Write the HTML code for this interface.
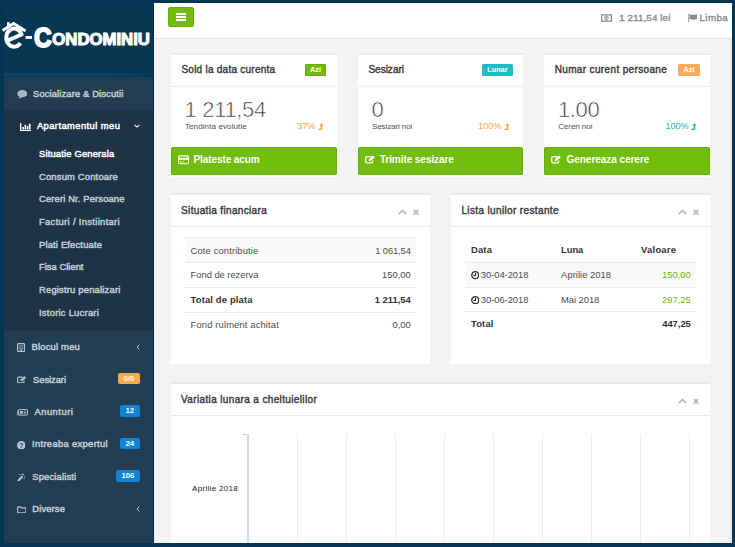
<!DOCTYPE html>
<html><head><meta charset="utf-8"><title>e-Condominiu</title>
<style>
*{box-sizing:border-box;margin:0;padding:0}
html,body{width:735px;height:547px;overflow:hidden}
body{background:#043552;font-family:"Liberation Sans",sans-serif;font-size:9.05px;color:#676a6c;position:relative}
.abs{position:absolute}
#side{left:4px;top:3px;width:148.5px;height:540px;background:#223d51}
#shead{left:0;top:0;width:148.5px;height:73.5px;background:linear-gradient(to right,#09436b 0,#09436b 72%,#06395a 100%) left bottom/100% 3.4px no-repeat,#063853}
#sact{left:0;top:107px;width:148.5px;height:220.5px;background:#1e3446}
#sline{left:152.5px;top:3px;width:1px;height:540px;background:#0b2a45}
#main{left:153.5px;top:3px;width:578.5px;height:540px;background:#f3f3f4;overflow:hidden}
#rb{left:732px;top:0;width:3px;height:547px;background:#043552}
#topbar{left:0;top:0;width:578.5px;height:35.5px;background:#fff;border-bottom:1px solid #e4e7ea}
#scroll{left:575px;top:35.5px;width:3.5px;height:505px;background:#ebebee}
.nav{position:absolute;left:0;width:148.5px;height:14px;line-height:14px;font-weight:normal;-webkit-text-stroke:0.46px currentColor;color:#c2cdd5;white-space:nowrap;font-size:9.4px}
.nav span.t{position:absolute;top:0}
.nav.w{color:#fff}
.nav svg{position:absolute}
.bdg{position:absolute;height:11.3px;line-height:11.6px;border-radius:2px;color:#fff;font-size:7.7px;font-weight:bold;text-align:center}
.card{position:absolute;background:#fff;border-top:2px solid #e7eaec}
.ttl{position:absolute;font-weight:normal;-webkit-text-stroke:0.42px #3a3e41;color:#3a3e41;font-size:10px;white-space:nowrap;line-height:12px}
.sep{position:absolute;left:0;right:0;height:1px;background:#e7eaec}
.btn{position:absolute;background:#72bc0c;box-shadow:inset 0 0 0 1px #65b00a;border-radius:2.5px;color:#fff;font-weight:bold;font-size:10.1px;white-space:nowrap}
.btn span{position:absolute;line-height:12px}
.big{position:absolute;font-size:22px;color:#33373a;white-space:nowrap;line-height:22px;letter-spacing:-0.35px;-webkit-text-stroke:0.6px #fff}
.sm{position:absolute;font-size:8.1px;white-space:nowrap;line-height:9px;color:#4c4f52}
.pct{position:absolute;font-size:9.05px;white-space:nowrap;line-height:9px;font-weight:normal}
.row{position:absolute;height:24.8px;border-top:1px solid #e7eaec;line-height:24.4px;white-space:nowrap;color:#4b4e51;font-size:9.4px}
.row span{position:absolute;top:0}
.row .r{text-align:right}
.b{font-weight:bold;color:#2f3336}
.tb{font-size:9.75px;font-weight:normal;-webkit-text-stroke:0.35px currentColor;color:#868b90;line-height:12px;white-space:nowrap}
.gl{position:absolute;top:430.6px;width:1px;height:110px;background:#ececef}
.lv{display:inline-block;vertical-align:-0.6px;margin-left:2.2px}
</style></head><body>
<div id="side" class="abs">
 <div id="shead" class="abs"><svg class="abs" style="left:-4px;top:-3px;overflow:visible" width="153" height="76" viewBox="0 0 153 76" fill="#fff" font-family="Liberation Sans, sans-serif" font-weight="bold"><path d="M2.5 30.4 L13.6 23.5 L25.6 30.9" fill="none" stroke="#fff" stroke-width="2.9"/><rect x="7" y="22.2" width="2.7" height="4.4"/><path d="M6.6 41 L21.6 34.5 A7.9 9.1 0 1 0 20.4 43.2" fill="none" stroke="#fff" stroke-width="4" stroke-linejoin="round"/><rect x="25.6" y="36" width="6.4" height="2.9"/><text x="33.9" y="46.9" font-size="28" stroke="#fff" stroke-width="1.9" textLength="17.6" lengthAdjust="spacingAndGlyphs">C</text><text x="52.3" y="45.1" font-size="17.4" stroke="#fff" stroke-width="1.15" textLength="97.6" lengthAdjust="spacingAndGlyphs">ONDOMINIU</text></svg>
</div>
 <div id="sact" class="abs"></div>
 <div class="nav " style="top:83.7px"><span class="t" id="n1" style="left:29.0px;letter-spacing:0.131px;">Socializare &amp; Discutii</span></div>
<svg style="position:absolute;left:13.0px;top:87.4px;color:#a9b8c3;" width="10.3" height="8.8" viewBox="0 0 20 17" fill="currentColor" ><ellipse cx="10.3" cy="7" rx="9.7" ry="7"/><path d="M5.5 11.5 L3 17 L10.5 13.5z"/></svg> <div class="nav w" style="top:116.4px"><span class="t" id="n2" style="left:32.9px;letter-spacing:0.425px;">Apartamentul meu</span></div>
<svg style="position:absolute;left:15.5px;top:119.7px;color:#fff;" width="11.5" height="8.5" viewBox="0 0 23 17" fill="currentColor" ><path d="M0 0h2.6v14.2H23V17H0z"/><rect x="4.6" y="8" width="3.4" height="5"/><rect x="9" y="3.6" width="3.4" height="9.4"/><rect x="13.4" y="6" width="3.4" height="7"/><rect x="17.8" y="1.6" width="3.4" height="11.4"/></svg> <div class="nav w" style="top:144.0px"><span class="t" id="n3" style="left:35.0px;letter-spacing:0.174px;">Situatie Generala</span></div>
 <div class="nav " style="top:166.6px"><span class="t" id="n4" style="left:35.0px;letter-spacing:0.188px;">Consum Contoare</span></div>
 <div class="nav " style="top:189.4px"><span class="t" id="n5" style="left:35.0px;letter-spacing:0.144px;">Cereri Nr. Persoane</span></div>
 <div class="nav " style="top:211.9px"><span class="t" id="n6" style="left:35.0px;letter-spacing:0.334px;">Facturi / Instiintari</span></div>
 <div class="nav " style="top:234.6px"><span class="t" id="n7" style="left:35.0px;letter-spacing:0.176px;">Plati Efectuate</span></div>
 <div class="nav " style="top:257.4px"><span class="t" id="n8" style="left:35.0px;letter-spacing:0.019px;">Fisa Client</span></div>
 <div class="nav " style="top:280.0px"><span class="t" id="n9" style="left:35.0px;letter-spacing:0.203px;">Registru penalizari</span></div>
 <div class="nav " style="top:302.7px"><span class="t" id="n10" style="left:35.0px;letter-spacing:0.255px;">Istoric Lucrari</span></div>
 <div class="nav " style="top:337.4px"><span class="t" id="n11" style="left:27.5px;letter-spacing:0.212px;">Blocul meu</span></div>
<svg style="position:absolute;left:12.6px;top:340.2px;color:#b4c2cc;" width="8.2" height="9.2" viewBox="0 0 16 18" fill="none" stroke="currentColor" ><rect x="1.3" y="1.3" width="13.4" height="15.4" rx="1.5" stroke-width="2.5"/><path d="M4.4 5.2h7.2M4.4 8.2h7.2M4.4 11.2h7.2" stroke-width="1.8" stroke-dasharray="2 0.6"/><rect x="6" y="13" width="4" height="4" fill="currentColor" stroke="none"/></svg> <div class="nav " style="top:369.7px"><span class="t" id="n12" style="left:29.0px;letter-spacing:-0.044px;">Sesizari</span></div>
<svg style="position:absolute;left:12.9px;top:372.8px;color:#b4c2cc;" width="9.6" height="7.6" viewBox="0 0 19 15" fill="none" stroke="currentColor" ><path d="M10.6 2.3H3.4a2.1 2.1 0 0 0-2.1 2.1v7.2a2.1 2.1 0 0 0 2.1 2.1h8.4a2.1 2.1 0 0 0 2.1-2.1V9.6" stroke-width="2.3"/><path d="M6.6 10.6 L7.4 6.8 L14.4 0.2 L18 3.6 L10.6 10z" fill="currentColor" stroke="none"/></svg> <div class="nav " style="top:401.6px"><span class="t" id="n13" style="left:30.4px;letter-spacing:0.510px;">Anunturi</span></div>
<svg style="position:absolute;left:12.9px;top:406.0px;color:#b4c2cc;" width="11" height="6.7" viewBox="0 0 22 13" fill="none" stroke="currentColor" ><rect x="3.4" y="1" width="17.6" height="11" rx="1" stroke-width="2"/><path d="M3.4 3.5H1v7.5a1.2 1.2 0 0 0 2.4 0" stroke-width="1.6"/><rect x="6.2" y="3.8" width="5.6" height="5.4" fill="currentColor" stroke="none"/><path d="M13.5 4.5h5M13.5 6.8h5M13.5 9.1h5" stroke-width="1.3"/></svg> <div class="nav " style="top:434.4px"><span class="t" id="n14" style="left:28.0px;letter-spacing:0.332px;">Intreaba expertul</span></div>
<svg style="position:absolute;left:12.9px;top:437.6px;color:#b9c6cf;" width="8.6" height="8.6" viewBox="0 0 17 17" fill="currentColor" ><circle cx="8.5" cy="8.5" r="8.5"/><text x="8.5" y="13.4" font-size="13.5" font-weight="bold" font-family="Liberation Sans, sans-serif" text-anchor="middle" fill="#223d51">?</text></svg> <div class="nav " style="top:466.7px"><span class="t" id="n15" style="left:28.3px;letter-spacing:0.162px;">Specialisti</span></div>
<svg style="position:absolute;left:12.9px;top:469.8px;color:#b9c6cf;" width="8.7" height="8.7" viewBox="0 0 17 17" fill="currentColor" ><path d="M0.4 14.2 L9.6 5 L12.4 7.8 L3.2 17z"/><path d="M11.4 0l.8 2.2 2.2.8-2.2.8-.8 2.2-.8-2.2-2.2-.8 2.2-.8zM15 5.4l.6 1.6 1.4.5-1.4.5-.6 1.6-.6-1.6-1.4-.5 1.4-.5zM5.6 0.6l.6 1.5 1.5.6-1.5.6-.6 1.5-.6-1.5-1.5-.6 1.5-.6zM13.8 9.6l.5 1.3 1.3.5-1.3.5-.5 1.3-.5-1.3-1.3-.5 1.3-.5z"/></svg> <div class="nav " style="top:499.4px"><span class="t" id="n16" style="left:28.3px;letter-spacing:0.131px;">Diverse</span></div>
<svg style="position:absolute;left:12.9px;top:502.7px;color:#b4c2cc;" width="9.6" height="7.5" viewBox="0 0 19 15" fill="none" stroke="currentColor" ><path d="M1.3 3.2a1.6 1.6 0 0 1 1.6-1.6h3.8l1.7 2.3h7.7a1.6 1.6 0 0 1 1.6 1.6v6.6a1.6 1.6 0 0 1-1.6 1.6H2.9a1.6 1.6 0 0 1-1.6-1.6z" stroke-width="2.5"/></svg><svg style="position:absolute;left:130.0px;top:120.4px;color:#fff;" width="6" height="6" viewBox="0 0 12 8" fill="none" stroke="currentColor" ><path d="M1.2 1.6 L6 6.2 L10.8 1.6" stroke-width="2.2"/></svg><svg style="position:absolute;left:131.6px;top:341.3px;color:#b4c2cc;" width="4.2" height="6.2" viewBox="0 0 8 12" fill="none" stroke="currentColor" ><path d="M6.2 1.4 L2 6 L6.2 10.6" stroke-width="1.9"/></svg><svg style="position:absolute;left:131.6px;top:503.3px;color:#b4c2cc;" width="4.2" height="6.2" viewBox="0 0 8 12" fill="none" stroke="currentColor" ><path d="M6.2 1.4 L2 6 L6.2 10.6" stroke-width="1.9"/></svg> <div class="bdg" style="background:#fba94d;left:113.7px;top:370.2px;width:22.3px">0/0</div>
 <div class="bdg" style="background:#1085d6;left:116.0px;top:402.4px;width:19.7px">12</div>
 <div class="bdg" style="background:#1085d6;left:116.0px;top:435.0px;width:19.7px">24</div>
 <div class="bdg" style="background:#1085d6;left:112.0px;top:467.3px;width:23.7px">106</div>
</div>
<div id="sline" class="abs"></div>
<div id="main" class="abs">
 <div id="topbar" class="abs"></div>
<div class="abs" id="ham" style="left:14.1px;top:3.8px;width:26.2px;height:20.4px;background:#72bd0c;border:1px solid #61ad0a;border-radius:2.2px"><i class="abs" style="left:7.4px;top:5.5px;width:9.6px;height:1.9px;background:#fff"></i><i class="abs" style="left:7.4px;top:8.25px;width:9.6px;height:1.9px;background:#fff"></i><i class="abs" style="left:7.4px;top:11px;width:9.6px;height:1.9px;background:#fff"></i></div>
<svg style="position:absolute;left:447.7px;top:10.6px;color:#7f8489;" width="11" height="8" viewBox="0 0 22 15" fill="none" stroke="currentColor" ><rect x="1.2" y="1.2" width="19.6" height="12.6" stroke-width="2.4"/><ellipse cx="11" cy="7.5" rx="3.4" ry="4" stroke-width="1.8"/><path d="M11 5v5" stroke-width="1.4"/></svg><div class="abs tb" id="tb1" style="left:465.7px;top:8.7px;letter-spacing:0.133px;">1 211,54 lei</div>
<svg style="position:absolute;left:534.1px;top:10.0px;color:#868b90;" width="9.5" height="9.5" viewBox="0 0 19 17" fill="currentColor" ><rect x="0.6" y="0.5" width="1.9" height="16.5"/><path d="M3.4 2.6c3-1.8 5 .9 8 .3 2-.4 3.6-1.2 6.6-1.6v9.6c-3 .4-4.6 1.2-6.6 1.6-3 .6-5-2.1-8-.3z"/></svg><div class="abs tb" id="tb2" style="left:546.0px;top:8.7px;letter-spacing:0.407px;">Limba</div>
<div class="card" id="c1" style="left:17.5px;top:50.0px;width:166.0px;height:124.4px"><div class="ttl" id="c1t" style="left:10.4px;top:8.7px;letter-spacing:0.252px;">Sold la data curenta</div><div class="bdg" id="c1b" style="background:#6eba0c;left:134.0px;top:9.4px;width:21.0px;height:11.2px;line-height:11.4px;font-size:7.3px;border-radius:1.6px;box-shadow:inset 0 0 0 1px #63ae0a;background:#72bd0c">Azi</div><div class="sep" style="top:31px"></div><div class="big" id="c1n" style="left:13.6px;top:44.1px;">1 211,54</div><div class="sm" id="c1s" style="left:13.9px;top:67.3px;letter-spacing:0.073px;">Tendinta evolutie</div><div class="pct" id="c1p" style="right:13.9px;top:67.3px;color:#f9a343">37%<svg style=";" width="5.6" height="7.4" viewBox="0 0 12 16" fill="currentColor" class="lv"><path d="M7.5 0 L12 5.6 H9.2 V15.2 H1.2 L0 12.4 H5.8 V5.6 H3z"/></svg></div></div>
<div class="btn" id="b1" style="left:17.5px;top:144.1px;width:166.0px;height:28px"><svg style="position:absolute;left:6.6px;top:7.9px;color:#fff;" width="11" height="9.6" viewBox="0 0 22 18" fill="none" stroke="currentColor" ><rect x="1.2" y="1.2" width="19.6" height="15.6" rx="2.2" stroke-width="2.2"/><rect x="1.2" y="5" width="19.6" height="4" fill="currentColor" stroke="none"/><path d="M4 13.2h3M8.5 13.2h4.5" stroke-width="1.8"/></svg><span id="b1t" style="left:22.5px;top:6.6px;letter-spacing:-0.130px;">Plateste acum</span></div>
<div class="card" id="c2" style="left:204.5px;top:50.0px;width:165.0px;height:124.4px"><div class="ttl" id="c2t" style="left:10.4px;top:8.7px;letter-spacing:0.007px;">Sesizari</div><div class="bdg" id="c2b" style="background:#20bcc6;left:124.0px;top:9.4px;width:30.8px;height:11.2px;line-height:11.4px;font-size:7.3px;border-radius:1.6px;">Lunar</div><div class="sep" style="top:31px"></div><div class="big" id="c2n" style="left:13.6px;top:44.1px;">0</div><div class="sm" id="c2s" style="left:13.9px;top:67.3px;letter-spacing:-0.121px;">Sesizari noi</div><div class="pct" id="c2p" style="right:13.9px;top:67.3px;color:#f9a343">100%<svg style=";" width="5.6" height="7.4" viewBox="0 0 12 16" fill="currentColor" class="lv"><path d="M7.5 0 L12 5.6 H9.2 V15.2 H1.2 L0 12.4 H5.8 V5.6 H3z"/></svg></div></div>
<div class="btn" id="b2" style="left:204.5px;top:144.1px;width:165.0px;height:28px"><svg style="position:absolute;left:6.6px;top:8.1px;color:#fff;" width="10.4" height="8.9" viewBox="0 0 19 15" fill="none" stroke="currentColor" ><path d="M10.6 2.3H3.4a2.1 2.1 0 0 0-2.1 2.1v7.2a2.1 2.1 0 0 0 2.1 2.1h8.4a2.1 2.1 0 0 0 2.1-2.1V9.6" stroke-width="2.3"/><path d="M6.6 10.6 L7.4 6.8 L14.4 0.2 L18 3.6 L10.6 10z" fill="currentColor" stroke="none"/></svg><span id="b2t" style="left:21.8px;top:6.6px;letter-spacing:-0.104px;">Trimite sesizare</span></div>
<div class="card" id="c3" style="left:390.8px;top:50.0px;width:165.9px;height:124.4px"><div class="ttl" id="c3t" style="left:10.4px;top:8.7px;letter-spacing:0.354px;">Numar curent persoane</div><div class="bdg" id="c3b" style="background:#f8ac59;left:133.7px;top:9.4px;width:22.0px;height:11.2px;line-height:11.4px;font-size:7.3px;border-radius:1.6px;">Azi</div><div class="sep" style="top:31px"></div><div class="big" id="c3n" style="left:13.6px;top:44.1px;">1.00</div><div class="sm" id="c3s" style="left:13.9px;top:67.3px;letter-spacing:-0.089px;">Cereri noi</div><div class="pct" id="c3p" style="right:13.9px;top:67.3px;color:#17b6be">100%<svg style=";" width="5.6" height="7.4" viewBox="0 0 12 16" fill="currentColor" class="lv"><path d="M7.5 0 L12 5.6 H9.2 V15.2 H1.2 L0 12.4 H5.8 V5.6 H3z"/></svg></div></div>
<div class="btn" id="b3" style="left:390.8px;top:144.1px;width:165.9px;height:28px"><svg style="position:absolute;left:6.9px;top:8.1px;color:#fff;" width="10.4" height="8.9" viewBox="0 0 19 15" fill="none" stroke="currentColor" ><path d="M10.6 2.3H3.4a2.1 2.1 0 0 0-2.1 2.1v7.2a2.1 2.1 0 0 0 2.1 2.1h8.4a2.1 2.1 0 0 0 2.1-2.1V9.6" stroke-width="2.3"/><path d="M6.6 10.6 L7.4 6.8 L14.4 0.2 L18 3.6 L10.6 10z" fill="currentColor" stroke="none"/></svg><span id="b3t" style="left:22.2px;top:6.6px;letter-spacing:-0.087px;">Genereaza cerere</span></div>
<div class="card" id="p1" style="left:17.2px;top:189.6px;width:259.8px;height:171.4px"><div class="ttl" id="p1t" style="left:10.4px;top:10.9px;letter-spacing:0.342px;">Situatia financiara</div><svg style="position:absolute;left:227.3px;top:14.6px;color:#b8b8b8;" width="9" height="6" viewBox="0 0 16 10" fill="none" stroke="currentColor" ><path d="M1.4 8.6 L8 2.2 L14.6 8.6" stroke-width="3"/></svg><svg style="position:absolute;left:242.5px;top:14.2px;color:#b8b8b8;" width="6" height="6.6" viewBox="0 0 12 12" fill="none" stroke="currentColor" ><path d="M1.6 1.6 L10.4 10.4 M10.4 1.6 L1.6 10.4" stroke-width="3.6"/></svg><div class="sep" style="top:31.5px"></div><div class="row" style="left:14.4px;top:42.0px;width:231.3px;background:#f9f9f9;height:25.8px;line-height:25.6px"><span id="p1r0a" style="left:5.5px;letter-spacing:0.133px;">Cote contributie</span><span id="p1r0b" class="r" style="right:5.6px;letter-spacing:-0.125px;">1 061,54</span></div><div class="row" style="left:14.4px;top:67.8px;width:231.3px;"><span id="p1r1a" style="left:5.5px;letter-spacing:-0.032px;">Fond de rezerva</span><span id="p1r1b" class="r" style="right:5.6px;">150,00</span></div><div class="row b" style="left:14.4px;top:92.6px;width:231.3px;"><span id="p1r2a" style="left:5.5px;letter-spacing:0.162px;">Total de plata</span><span id="p1r2b" class="r" style="right:5.6px;">1 211,54</span></div><div class="row" style="left:14.4px;top:117.4px;width:231.3px;"><span id="p1r3a" style="left:5.5px;letter-spacing:0.146px;">Fond rulment achitat</span><span id="p1r3b" class="r" style="right:5.6px;">0,00</span></div></div>
<div class="card" id="p2" style="left:297.5px;top:189.6px;width:259.5px;height:171.4px"><div class="ttl" id="p2t" style="left:10.4px;top:10.9px;letter-spacing:0.363px;">Lista lunilor restante</div><svg style="position:absolute;left:227.0px;top:14.6px;color:#b8b8b8;" width="9" height="6" viewBox="0 0 16 10" fill="none" stroke="currentColor" ><path d="M1.4 8.6 L8 2.2 L14.6 8.6" stroke-width="3"/></svg><svg style="position:absolute;left:242.2px;top:14.2px;color:#b8b8b8;" width="6" height="6.6" viewBox="0 0 12 12" fill="none" stroke="currentColor" ><path d="M1.6 1.6 L10.4 10.4 M10.4 1.6 L1.6 10.4" stroke-width="3.6"/></svg><div class="sep" style="top:31.5px"></div><div class="row b" style="left:14.1px;top:43.6px;width:231.3px;border-top:none"><span id="h1" style="left:5.8px;letter-spacing:0.242px;">Data</span><span id="h2" style="left:96px;letter-spacing:-0.075px;">Luna</span><span id="h3" style="left:176px;letter-spacing:0.249px;">Valoare</span></div><div class="row" style="left:14.1px;top:67.7px;width:231.3px;background:#f9f9f9"><svg style="position:absolute;left:5.6px;top:8.2px;color:#2a2d30;" width="8.4" height="8.4" viewBox="0 0 16 16" fill="none" stroke="currentColor" ><circle cx="8" cy="8" r="6.6" stroke-width="2.4"/><path d="M8.6 3.6V8.6H4.6" stroke-width="2"/></svg><span id="q0a" style="left:15.7px;letter-spacing:-0.036px;">30-04-2018</span><span id="q0b" style="left:96px;letter-spacing:0.040px;">Aprilie 2018</span><span id="q0c" class="r" style="right:5.6px;color:#6eb40c">150,00</span></div><div class="row" style="left:14.1px;top:92.3px;width:231.3px;"><svg style="position:absolute;left:5.6px;top:8.2px;color:#2a2d30;" width="8.4" height="8.4" viewBox="0 0 16 16" fill="none" stroke="currentColor" ><circle cx="8" cy="8" r="6.6" stroke-width="2.4"/><path d="M8.6 3.6V8.6H4.6" stroke-width="2"/></svg><span id="q1a" style="left:15.7px;letter-spacing:-0.036px;">30-06-2018</span><span id="q1b" style="left:96px;letter-spacing:-0.059px;">Mai 2018</span><span id="q1c" class="r" style="right:5.6px;color:#6eb40c">297,25</span></div><div class="row b" style="left:14.1px;top:116.9px;width:231.3px"><span id="q2a" style="left:5.8px;letter-spacing:0.221px;">Total</span><span id="q2c" class="r" style="right:5.6px;letter-spacing:-0.013px;">447,25</span></div></div>
<div class="card" id="p3" style="left:17.2px;top:378.9px;width:539.8px;height:178.1px"><div class="ttl" id="p3t" style="left:10.4px;top:9.9px;letter-spacing:0.359px;">Variatia lunara a cheltuielilor</div><svg style="position:absolute;left:507.3px;top:14.6px;color:#b8b8b8;" width="9" height="6" viewBox="0 0 16 10" fill="none" stroke="currentColor" ><path d="M1.4 8.6 L8 2.2 L14.6 8.6" stroke-width="3"/></svg><svg style="position:absolute;left:522.5px;top:14.2px;color:#b8b8b8;" width="6" height="6.6" viewBox="0 0 12 12" fill="none" stroke="currentColor" ><path d="M1.6 1.6 L10.4 10.4 M10.4 1.6 L1.6 10.4" stroke-width="3.6"/></svg><div class="sep" style="top:30.9px"></div></div>
<i class="gl" style="left:143.1px"></i><i class="gl" style="left:192.1px"></i><i class="gl" style="left:241.1px"></i><i class="gl" style="left:290.2px"></i><i class="gl" style="left:339.2px"></i><i class="gl" style="left:388.3px"></i><i class="gl" style="left:437.3px"></i><i class="gl" style="left:486.4px"></i><i class="gl" style="left:535.5px"></i>
<i class="abs" style="left:93.7px;top:430.6px;width:1.5px;height:111px;background:#d3dcef"></i><i class="abs" style="left:88.5px;top:430.6px;width:6px;height:1px;background:#cbd5ea"></i>
<div class="abs" id="apr" style="left:38.5px;top:480.5px;font-size:8.1px;color:#1c1c1c;line-height:10px;white-space:nowrap;letter-spacing:0.279px;">Aprilie 2018</div>
 <div id="scroll" class="abs"></div>
</div>
<div id="rb" class="abs"></div>
</body></html>
